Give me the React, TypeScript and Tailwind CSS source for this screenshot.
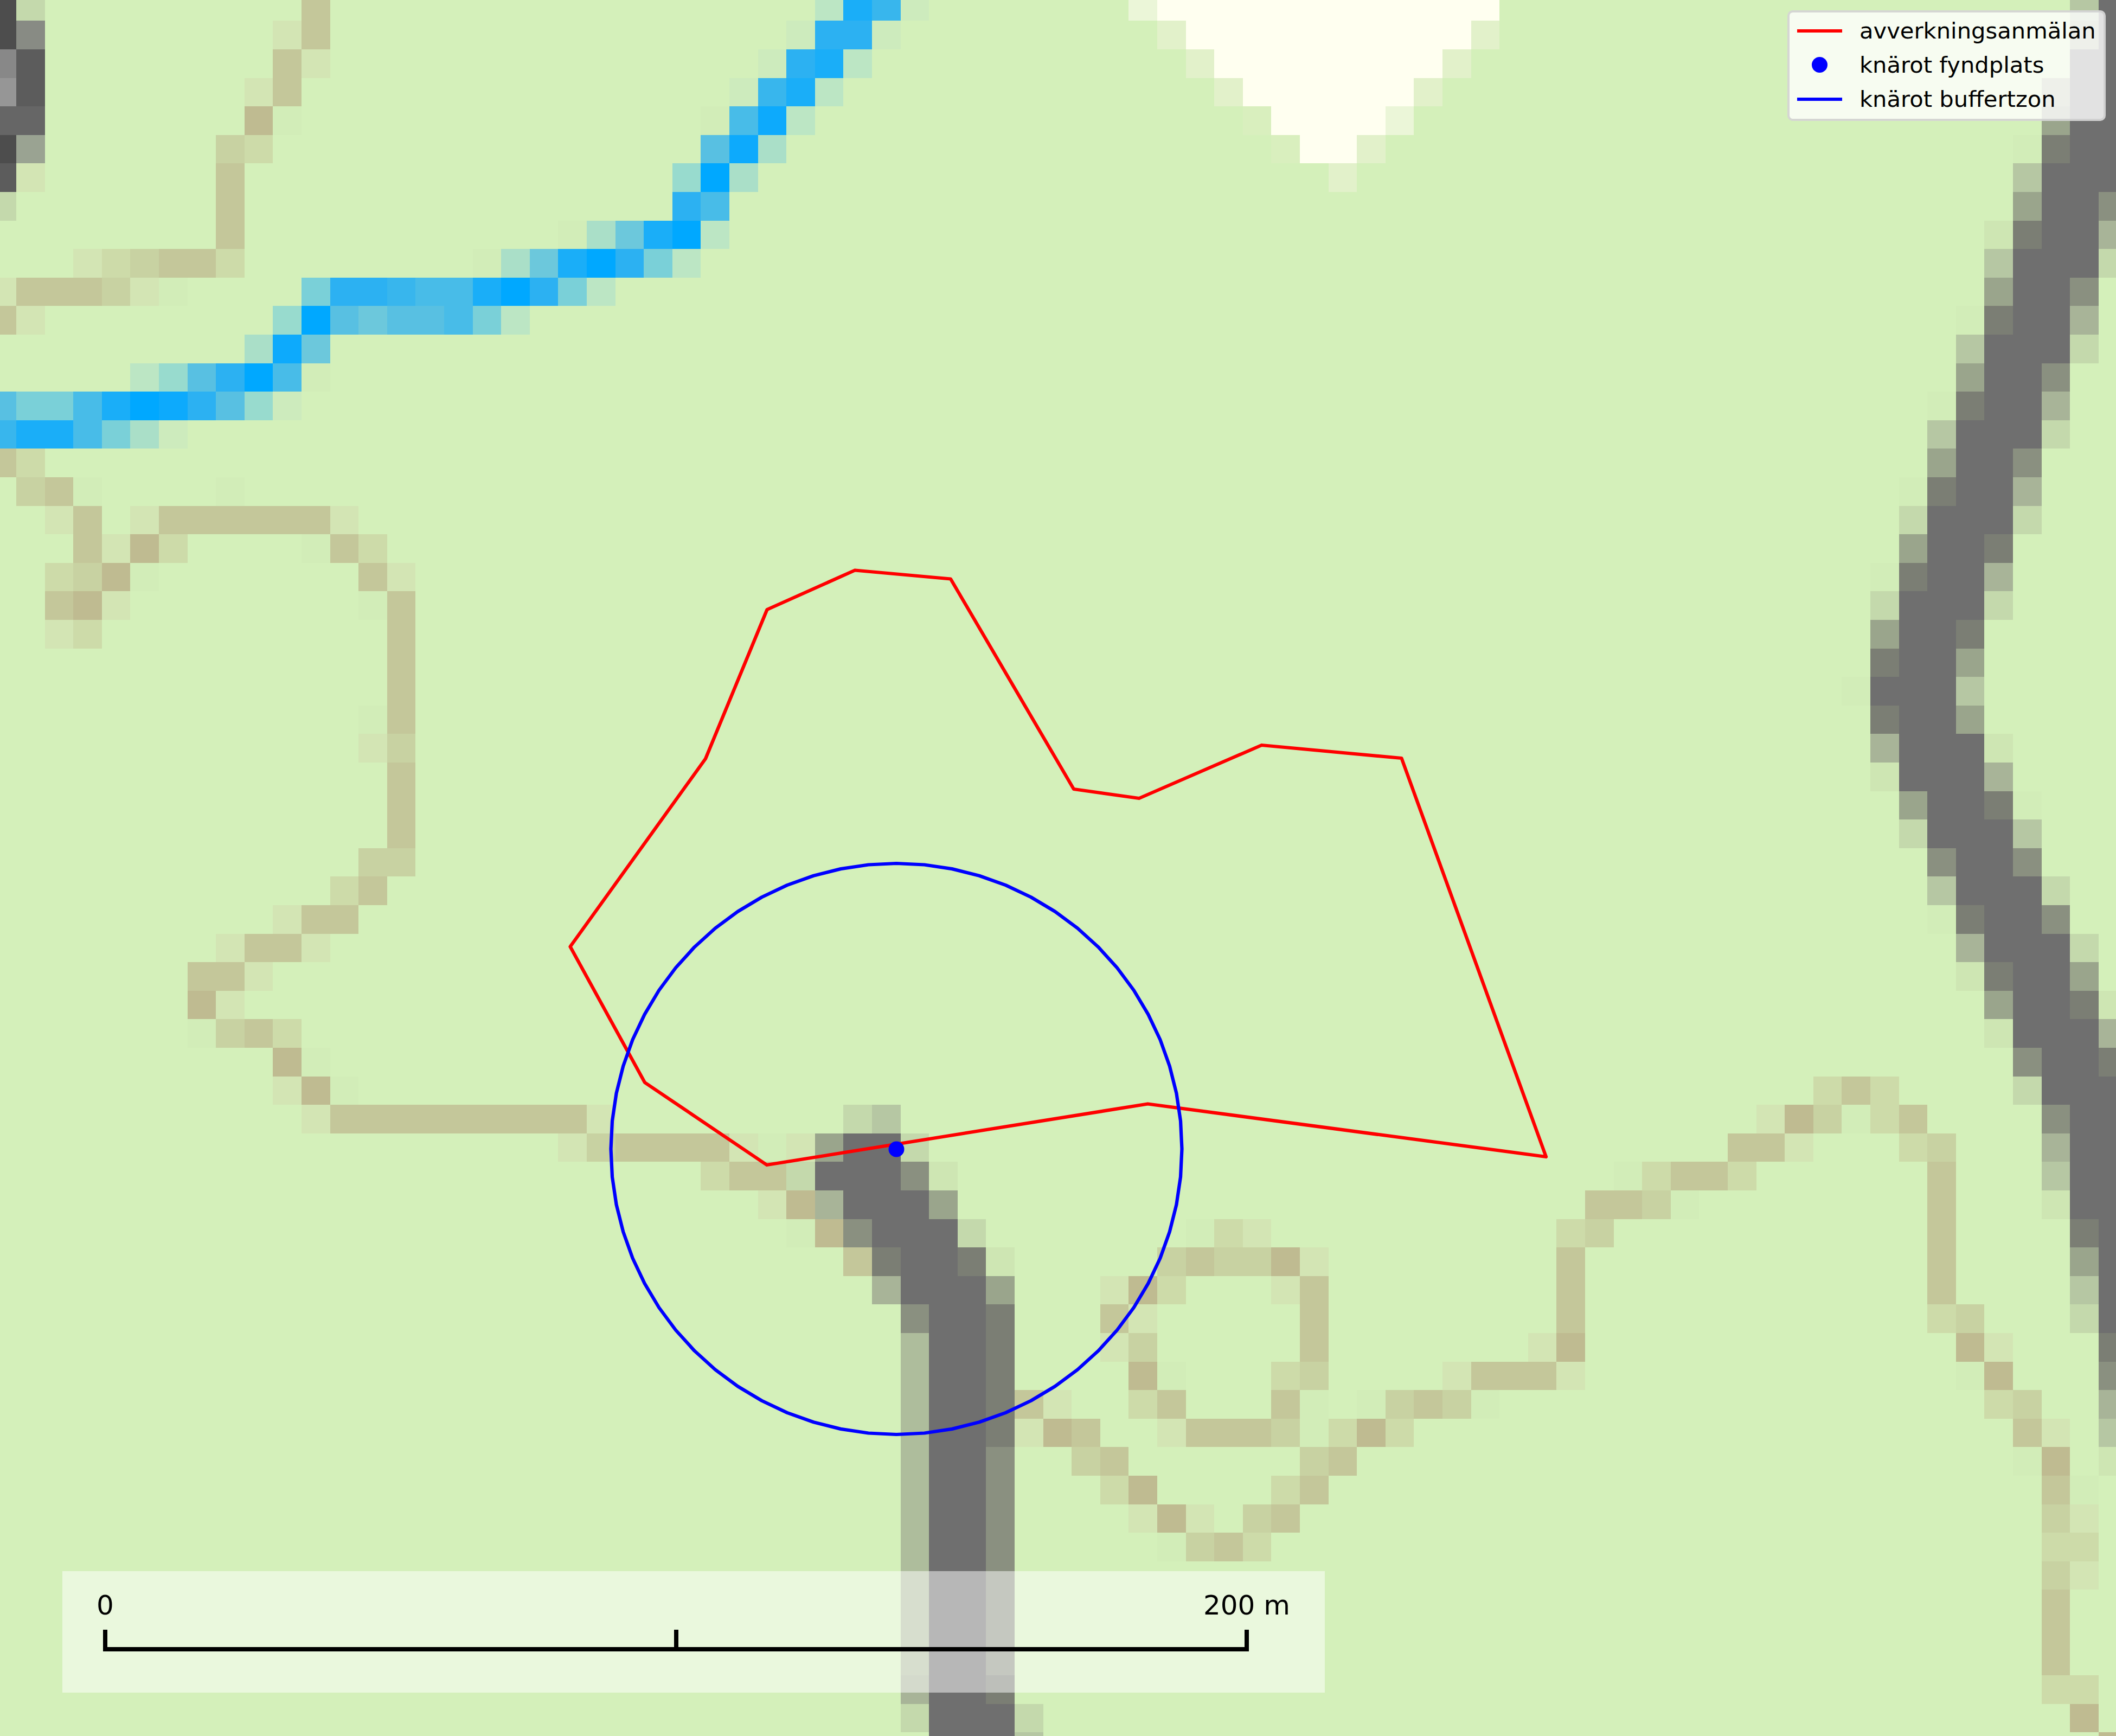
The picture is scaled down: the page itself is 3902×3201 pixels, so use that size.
const CELL = 52.6;
const ORIGIN_X = 30;
const ORIGIN_Y = 38.3;

const palette: Record<string, string> = {
  A: "#00a8ff", B: "#0daafc", C: "#1aaef8", D: "#2cb1f2", E: "#38b6ed", F: "#48bce8", G: "#58c0e2",
  H: "#6cc8dc", I: "#7ad0d8", J: "#98dbce", K: "#aadfc8", L: "#bce6c4", M: "#cdebbd",
  k: "#6f6f6f", l: "#7b7e74", m: "#8a9080", n: "#9aa58c", o: "#a8b498", p: "#b6c7a3", P: "#aebd9c", q: "#c4d9ac", r: "#cee6b3",
  f: "#d2edb8", g: "#d3e5b4", h: "#cddba9", i: "#c8d2a2", t: "#c4c79a", T: "#bfbb91",
  W: "#fffff0", V: "#ebf6d8", U: "#e2f1ca", S: "#d9efbe",
  x: "#4d4d4d", y: "#5c5c5c", z: "#888888", w: "#969696", v: "#666666", u: "#9aa392", s: "#888b84",
};

// one string per raster row: "<col>[-<col>]<colour>"
const raster = [
  "0x 1q 11t 29L 30C 31E 32M 40V 41-52W 73p 74k",
  "0x 1s 10g 11t 28M 29D 30D 31M 41U 42-51W 52U 73o 74k",
  "0z 1y 10t 11g 27M 28D 29C 30L 42U 43-50W 51U 73-74k",
  "0w 1y 9g 10t 26M 27E 28C 29L 43U 44-49W 50U 72o 73-74k",
  "0v 1v 9T 10f 25f 26F 27B 28L 44S 45-48W 49V 72n 73-74k",
  "0x 1u 8i 9h 25G 26B 27K 45S 46-47W 48U 71f 72l 73-74k",
  "0y 1g 8t 24J 25A 26K 47U 71p 72-74k",
  "0q 8t 24D 25F 71n 72-73k 74m",
  "8t 20f 21K 22H 23C 24A 25L 70r 71l 72-73k 74o",
  "3g 4h 5i 6-7t 8h 17f 18K 19H 20C 21A 22D 23I 24L 70p 71-73k 74q",
  "0g 1-3t 4i 5g 6f 11I 12D 13D 14E 15F 16F 17C 18A 19D 20I 21L 70n 71-72k 73m",
  "0t 1g 10J 11A 12G 13H 14G 15G 16F 17I 18L 69f 70l 71-72k 73o",
  "9K 10B 11H 69p 70-72k 73q",
  "5L 6J 7G 8D 9A 10F 11f 69n 70-71k 72m",
  "0G 1I 2I 3F 4C 5A 6B 7D 8G 9J 10M 68f 69l 70-71k 72o",
  "0E 1C 2C 3F 4I 5K 6M 68p 69-71k 72q",
  "0t 1h 68n 69-70k 71m",
  "1i 2t 3f 8f 67f 68l 69-70k 71o",
  "2g 3t 5g 6-11t 12g 67q 68-70k 71q",
  "3t 4g 5T 6h 11f 12t 13h 67n 68-69k 70l",
  "2h 3i 4T 5f 13t 14g 66f 67l 68-69k 70o",
  "2t 3T 4g 13f 14t 66q 67-69k 70q",
  "2g 3h 14t 66n 67-68k 69l",
  "14t 66l 67-68k 69n",
  "14t 65f 66-68k 69p",
  "13f 14t 66l 67-68k 69n",
  "13g 14i 66o 67-69k 70r",
  "14t 66r 67-69k 70o",
  "14t 67n 68-69k 70l 71f",
  "14t 67q 68-70k 71p",
  "13i 14i 68m 69-70k 71m",
  "12h 13t 68p 69-71k 72q",
  "10g 11-12t 68f 69l 70-71k 72m",
  "8g 9-10t 11g 69o 70-72k 73q",
  "7-8t 9g 69r 70l 71-72k 73n",
  "7T 8g 70n 71-72k 73l 74r",
  "7f 8i 9t 10h 70r 71-73k 74o",
  "10T 11f 71m 72-73k 74l",
  "10g 11T 12f 64h 65t 66h 71q 72-74k",
  "11g 12-20t 21g 30q 31p 62g 63T 64i 65f 66h 67t 72m 73-74k",
  "20g 21i 22-25t 26g 27f 28g 29n 30-31k 32q 61-62t 63g 67h 68i 72o 73-74k",
  "25h 26-27t 28q 29-31k 32m 33r 57f 58h 59-60t 61h 68t 72p 73-74k",
  "27g 28T 29o 30-32k 33n 56-57t 58i 59f 68t 72r 73-74k",
  "28f 29T 30m 31-33k 34q 42f 43h 44g 55h 56i 68t 73l 74k",
  "30t 31l 32-33k 34l 35r 41i 42t 43i 44i 45T 46g 55t 68t 73n 74k",
  "31o 32-34k 35n 39g 40T 41h 45g 46t 55t 68t 73p 74k",
  "32m 33-34k 35l 39t 40g 46t 55t 68h 69i 73q 74k",
  "32P 33-34k 35l 39g 40i 46t 54g 55T 69T 70g 74l",
  "32P 33-34k 35l 40T 41f 45h 46i 51g 52-54t 55g 69f 70T 74m",
  "32P 33-34k 35l 36t 37g 40h 41t 45t 46f 48f 49i 50t 51i 52f 70h 71i 74o",
  "32P 33-34k 35l 36g 37T 38t 41g 42-44t 45i 46f 47h 48T 49h 71t 72g 74p",
  "32P 33-34k 35m 38i 39t 46i 47t 71f 72T 74r",
  "32P 33-34k 35m 39h 40T 45h 46t 72t 73f",
  "32P 33-34k 35m 40g 41T 42g 44i 45t 72i 73g",
  "32P 33-34k 35m 41f 42i 43t 44h 72h 73h",
  "32P 33-34k 35m 72i 73g",
  "32P 33-34k 35m 72t",
  "32P 33-34k 35m 72t",
  "32P 33-34k 35m 72t",
  "32o 33-34k 35l 72h 73h",
  "32q 33-35k 36q 73T",
  "33-35k 36p 74T",
];

const cells = raster.flatMap((line, row) =>
  line.split(" ").map((token) => {
    const m = token.match(/^(\d+)(?:-(\d+))?(.)$/)!;
    const from = Number(m[1]);
    const to = m[2] ? Number(m[2]) : from;
    const x = Math.max(0, Math.round(ORIGIN_X + CELL * (from - 1)));
    const y = Math.max(0, Math.round(ORIGIN_Y + CELL * (row - 1)));
    const right = Math.round(ORIGIN_X + CELL * to);
    const bottom = Math.round(ORIGIN_Y + CELL * row);
    return { key: `${row}-${from}`, x, y, width: right - x, height: bottom - y, fill: palette[m[3]] };
  }),
);

const cuttingArea =
  "1051.5,1745.5 1301,1399 1414.5,1124 1576.5,1051.5 1753,1067.5 1980,1455 2100.5,1472 2326.5,1374 2584.5,1398 2851,2133 2116.5,2035.5 1414,2148 1189,1996";

const buffer = Array.from({ length: 64 }, (_, i) => {
  const angle = (i / 64) * Math.PI * 2;
  return `${(1653 + 526.5 * Math.cos(angle)).toFixed(1)},${(2118.5 + 526.5 * Math.sin(angle)).toFixed(1)}`;
}).join(" ");

function LegendRow({ label, children }: { label: string; children: React.ReactNode }) {
  return (
    <div className="flex h-[63px] items-center">
      <div className="flex w-[83px] items-center justify-center">{children}</div>
      <span className="ml-[32px]">{label}</span>
    </div>
  );
}

export default function App() {
  return (
    <div className="relative h-[3201px] w-[3902px] overflow-hidden bg-[#d4f0ba] font-['DejaVu_Sans',sans-serif] text-black">
      <svg className="absolute inset-0 block" width={3902} height={3201} viewBox="0 0 3902 3201">
        <g shapeRendering="crispEdges">
          {cells.map(({ key, ...cell }) => (
            <rect key={key} {...cell} />
          ))}
        </g>
        <polygon points={cuttingArea} fill="none" stroke="#ff0000" strokeWidth={6.25} strokeLinejoin="round" />
        <circle cx={1653} cy={2119} r={14.5} fill="#0000ff" />
        <polygon points={buffer} fill="none" stroke="#0000ff" strokeWidth={6.25} strokeLinejoin="round" />
      </svg>

      <div className="absolute left-[3296px] top-[19px] h-[204px] w-[587px] rounded-[10px] border-4 border-[#cccccc]/80 bg-white/80 pl-[14px] pt-[2px] text-[41.67px] leading-[63px]">
        <LegendRow label="avverkningsanmälan">
          <div className="h-[6px] w-full bg-[#ff0000]" />
        </LegendRow>
        <LegendRow label="knärot fyndplats">
          <div className="h-[29px] w-[29px] rounded-full bg-[#0000ff]" />
        </LegendRow>
        <LegendRow label="knärot buffertzon">
          <div className="h-[6px] w-full bg-[#0000ff]" />
        </LegendRow>
      </div>

      <div className="absolute left-[115px] top-[2897px] h-[224px] w-[2328px] bg-white/50 pl-[75px] pt-[33px]">
        <div className="w-[2113px]">
          <div className="flex justify-between px-[4px] text-[50px] leading-[60px]">
            <div className="flex w-0 justify-center whitespace-nowrap">0</div>
            <div className="flex w-0 justify-center whitespace-nowrap">200 m</div>
          </div>
          <div className="mt-[15px] flex h-[40px] justify-center border-x-8 border-b-8 border-black">
            <div className="w-[8px] bg-black" />
          </div>
        </div>
      </div>
    </div>
  );
}
